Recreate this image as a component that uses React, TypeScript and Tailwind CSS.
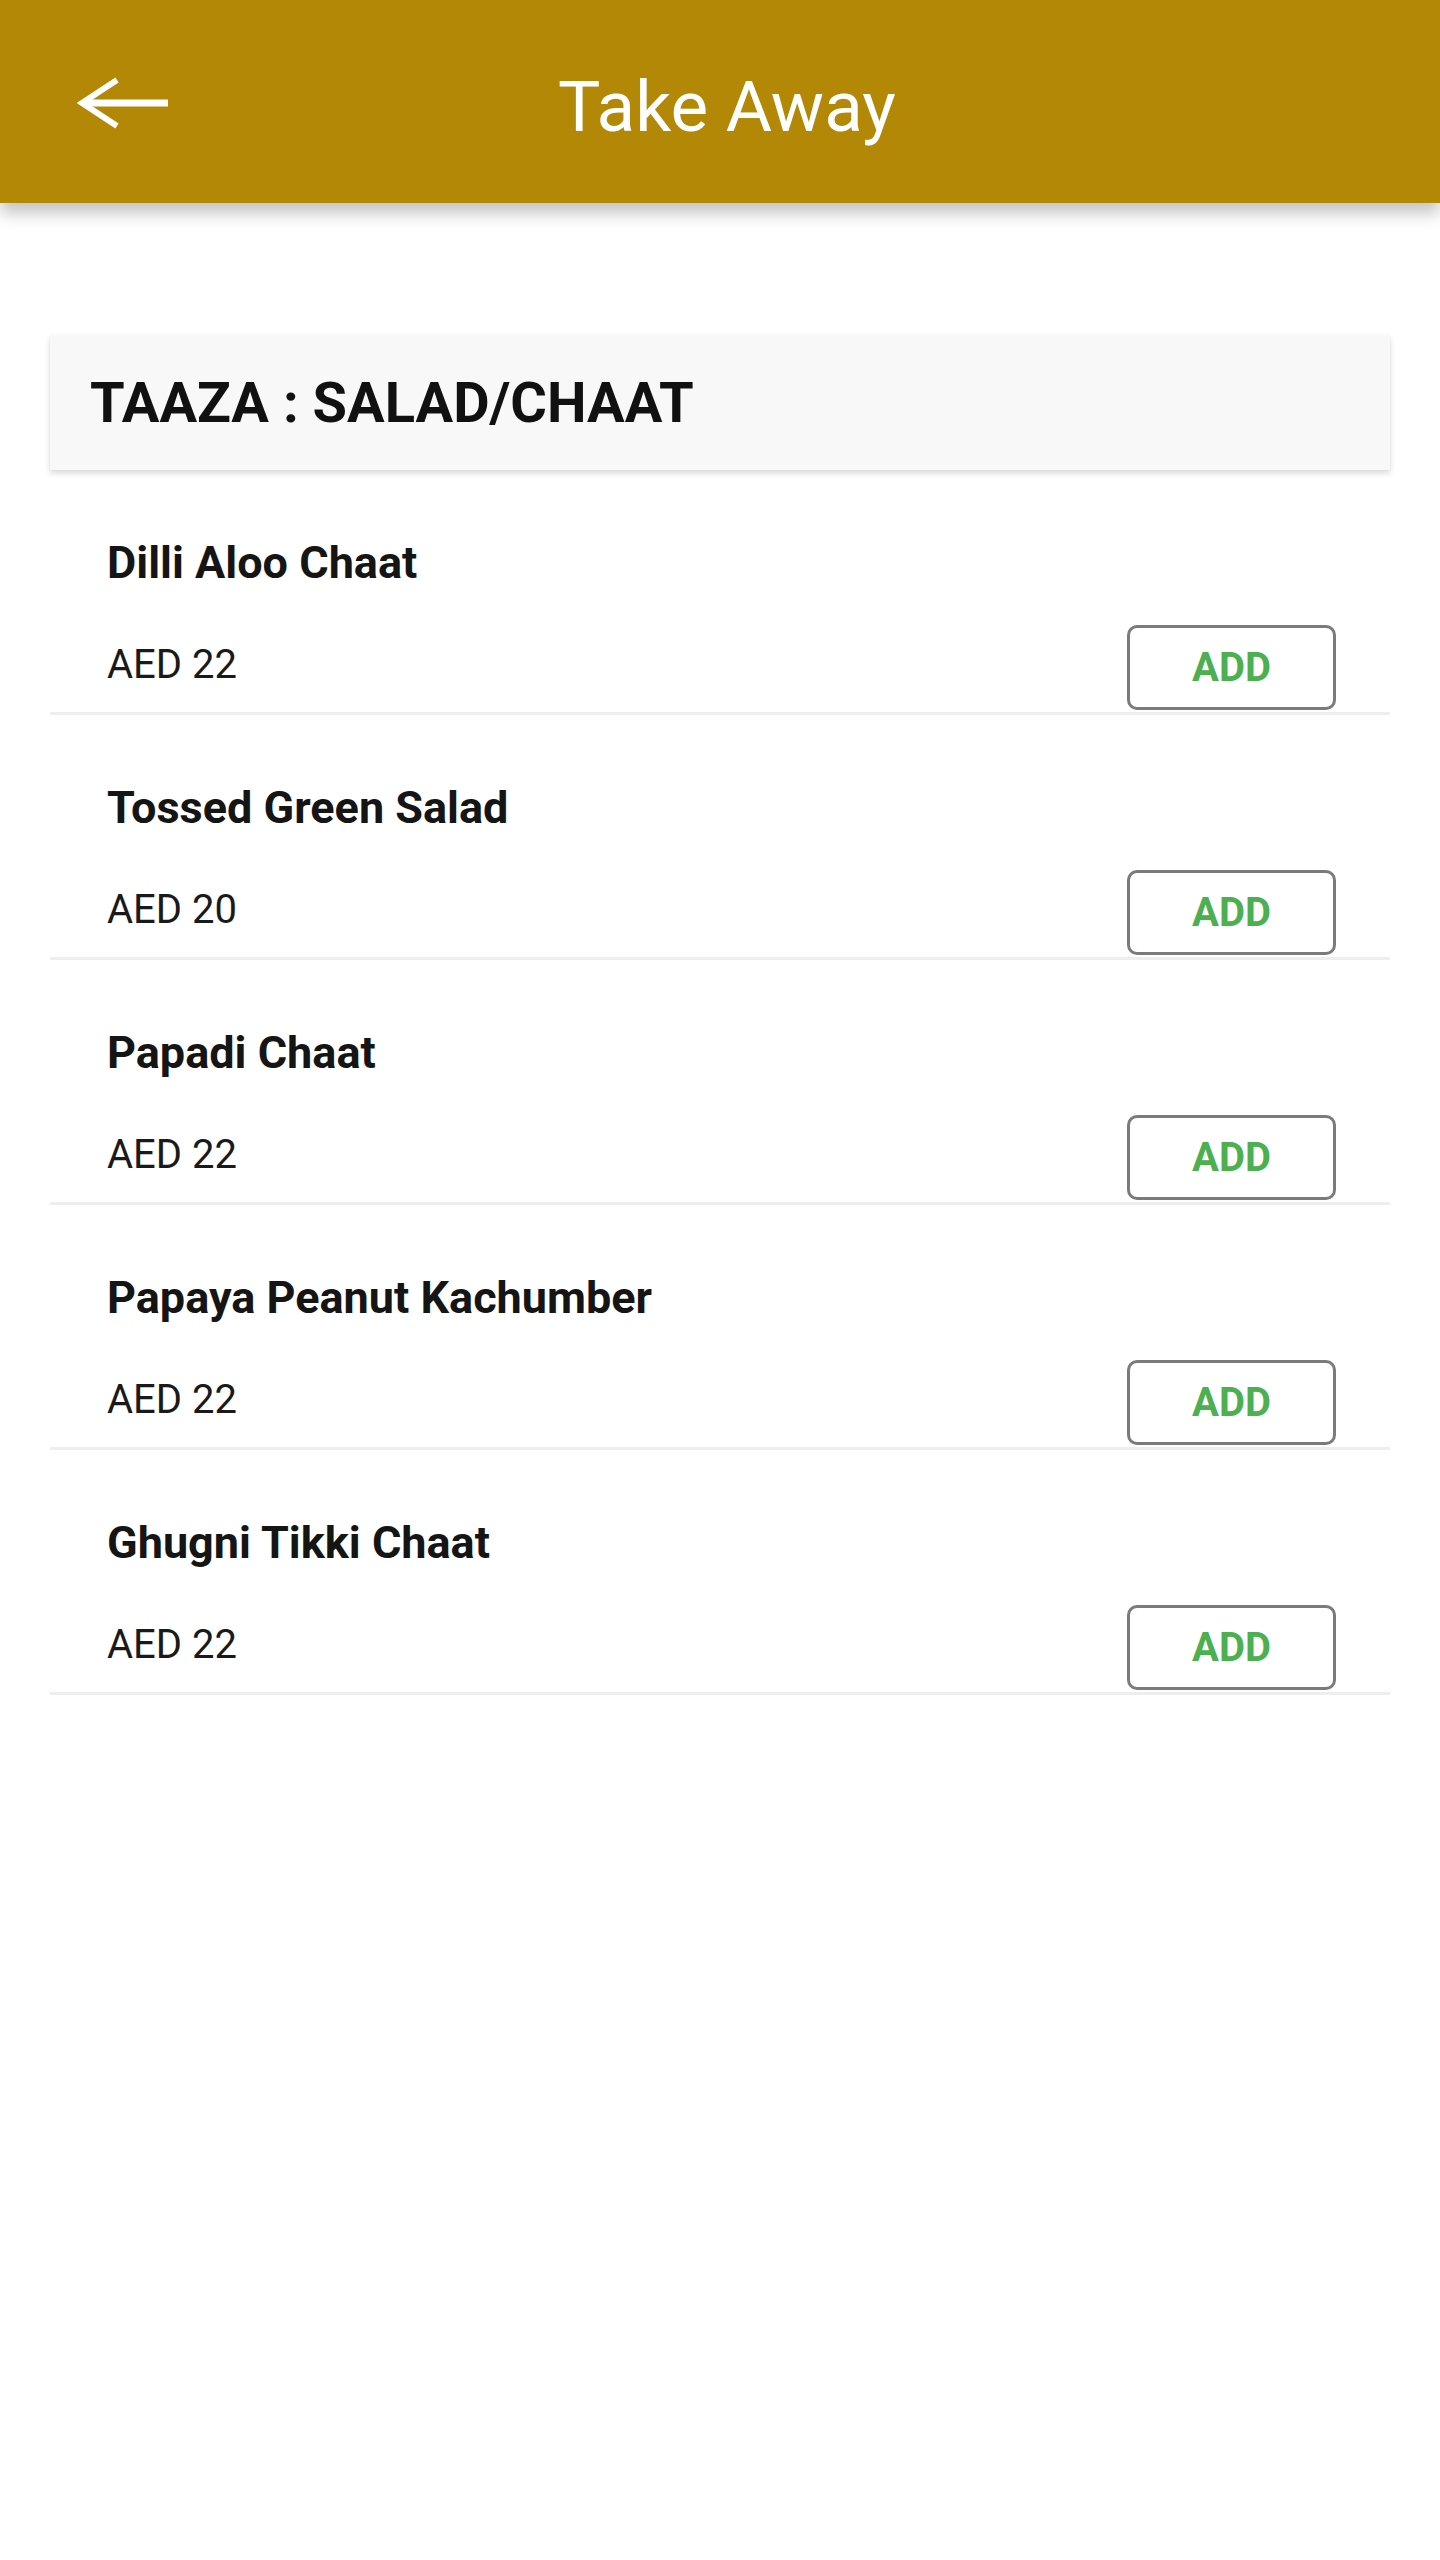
const items = [
  { name: "Dilli Aloo Chaat", price: 22 },
  { name: "Tossed Green Salad", price: 20 },
  { name: "Papadi Chaat", price: 22 },
  { name: "Papaya Peanut Kachumber", price: 22 },
  { name: "Ghugni Tikki Chaat", price: 22 },
];

function BackArrow() {
  return (
    <svg width="92" height="52" viewBox="0 0 92 52" fill="none">
      <path d="M91 26H8" stroke="white" strokeWidth="7" />
      <path d="M40 3L5 26L40 49" stroke="white" strokeWidth="6" />
    </svg>
  );
}

export default function App() {
  return (
    <div className="min-h-[2560px] w-[1440px] bg-white font-['Roboto',sans-serif]">
      <header className="relative z-10 grid h-[203px] grid-cols-[1fr_auto_1fr] items-center bg-[#b38807] shadow-[0_10px_16px_rgba(0,0,0,0.24)]">
        <div className="pl-[77px] pt-[2px]">
          <BackArrow />
        </div>
        <h1 className="pl-[14px] pt-[10px] text-[71px] font-normal leading-none text-white">
          Take Away
        </h1>
        <div />
      </header>

      <main className="mx-[50px] mt-[132px]">
        <div className="flex h-[135px] items-center bg-[#f8f8f8] pl-[40px] shadow-[0_3px_6px_rgba(0,0,0,0.16)]">
          <h2 className="text-[56px] font-bold text-[#111]">TAAZA : SALAD/CHAAT</h2>
        </div>

        <ul>
          {items.map((item) => (
            <li
              key={item.name}
              className="border-b-[3px] border-[#eeeeee] pb-[2px] pl-[57px] pr-[54px] pt-[67px]"
            >
              <div className="text-[45px] font-bold leading-[52px] text-[#151515]">
                {item.name}
              </div>
              <div className="mt-[36px] flex items-center justify-between">
                <span className="mb-[6px] text-[40px] text-[#1a1a1a]">AED {item.price}</span>
                <button className="flex h-[85px] w-[209px] items-center justify-center rounded-[10px] border-[3px] border-[#7b7b7b] text-[40px] font-bold text-[#4caf50]">
                  ADD
                </button>
              </div>
            </li>
          ))}
        </ul>
      </main>
    </div>
  );
}
